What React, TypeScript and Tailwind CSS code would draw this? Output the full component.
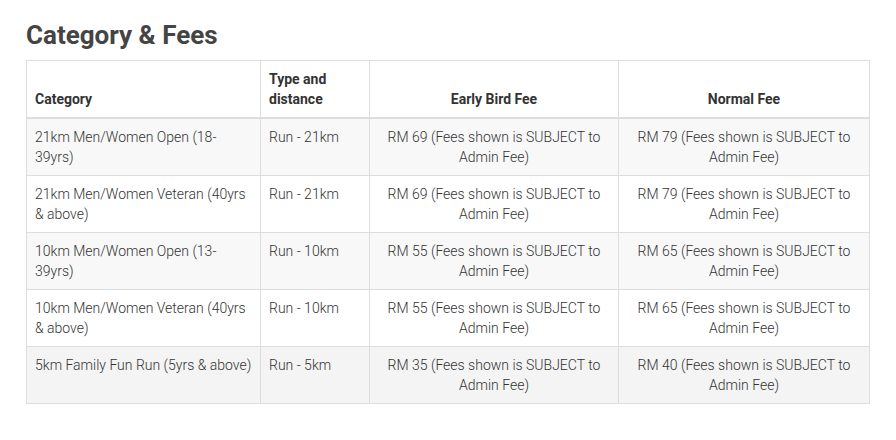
import React from "react";

const rows = [
  ["21km Men/Women Open (18-39yrs)", "Run - 21km", "RM 69 (Fees shown is SUBJECT to Admin Fee)", "RM 79 (Fees shown is SUBJECT to Admin Fee)"],
  ["21km Men/Women Veteran (40yrs & above)", "Run - 21km", "RM 69 (Fees shown is SUBJECT to Admin Fee)", "RM 79 (Fees shown is SUBJECT to Admin Fee)"],
  ["10km Men/Women Open (13-39yrs)", "Run - 10km", "RM 55 (Fees shown is SUBJECT to Admin Fee)", "RM 65 (Fees shown is SUBJECT to Admin Fee)"],
  ["10km Men/Women Veteran (40yrs & above)", "Run - 10km", "RM 55 (Fees shown is SUBJECT to Admin Fee)", "RM 65 (Fees shown is SUBJECT to Admin Fee)"],
  ["5km Family Fun Run (5yrs & above)", "Run - 5km", "RM 35 (Fees shown is SUBJECT to Admin Fee)", "RM 40 (Fees shown is SUBJECT to Admin Fee)"],
];

export default function App() {
  return (
    <div className="w-[896px] h-[440px] bg-white pl-[26px] pt-[20px]" style={{ fontFamily: "Roboto, 'Liberation Sans', sans-serif" }}>
      <h2 className="text-[26px] leading-[30px] font-bold text-[#444] mb-[10px]">Category &amp; Fees</h2>
      <table className="w-[843px] border-collapse border border-[#ddd] text-[14px] leading-[20px] text-[#333] table-fixed">
        <colgroup>
          <col className="w-[234px]" />
          <col className="w-[109px]" />
          <col className="w-[249px]" />
          <col className="w-[251px]" />
        </colgroup>
        <thead>
          <tr>
            <th className="border border-[#ddd] border-b-2 px-2 pt-2 pb-[8px] align-bottom text-left font-bold">Category</th>
            <th className="border border-[#ddd] border-b-2 px-2 pt-2 pb-[8px] align-bottom text-left font-bold">Type and distance</th>
            <th className="border border-[#ddd] border-b-2 px-2 pt-2 pb-[8px] align-bottom text-center font-bold">Early Bird Fee</th>
            <th className="border border-[#ddd] border-b-2 px-2 pt-2 pb-[8px] align-bottom text-center font-bold">Normal Fee</th>
          </tr>
        </thead>
        <tbody className="font-light">
          {rows.map((r, i) => (
            <tr key={i} className={i % 2 === 0 ? (i === 4 ? "bg-[#f4f4f4]" : "bg-[#f8f8f8]") : "bg-white"}>
              <td className="border border-[#ddd] px-2 pt-2 pb-[8px] align-top text-left">{r[0]}</td>
              <td className="border border-[#ddd] px-2 pt-2 pb-[8px] align-top text-left">{r[1]}</td>
              <td className="border border-[#ddd] px-2 pt-2 pb-[8px] align-top text-center">{r[2]}</td>
              <td className="border border-[#ddd] px-2 pt-2 pb-[8px] align-top text-center">{r[3]}</td>
            </tr>
          ))}
        </tbody>
      </table>
    </div>
  );
}
